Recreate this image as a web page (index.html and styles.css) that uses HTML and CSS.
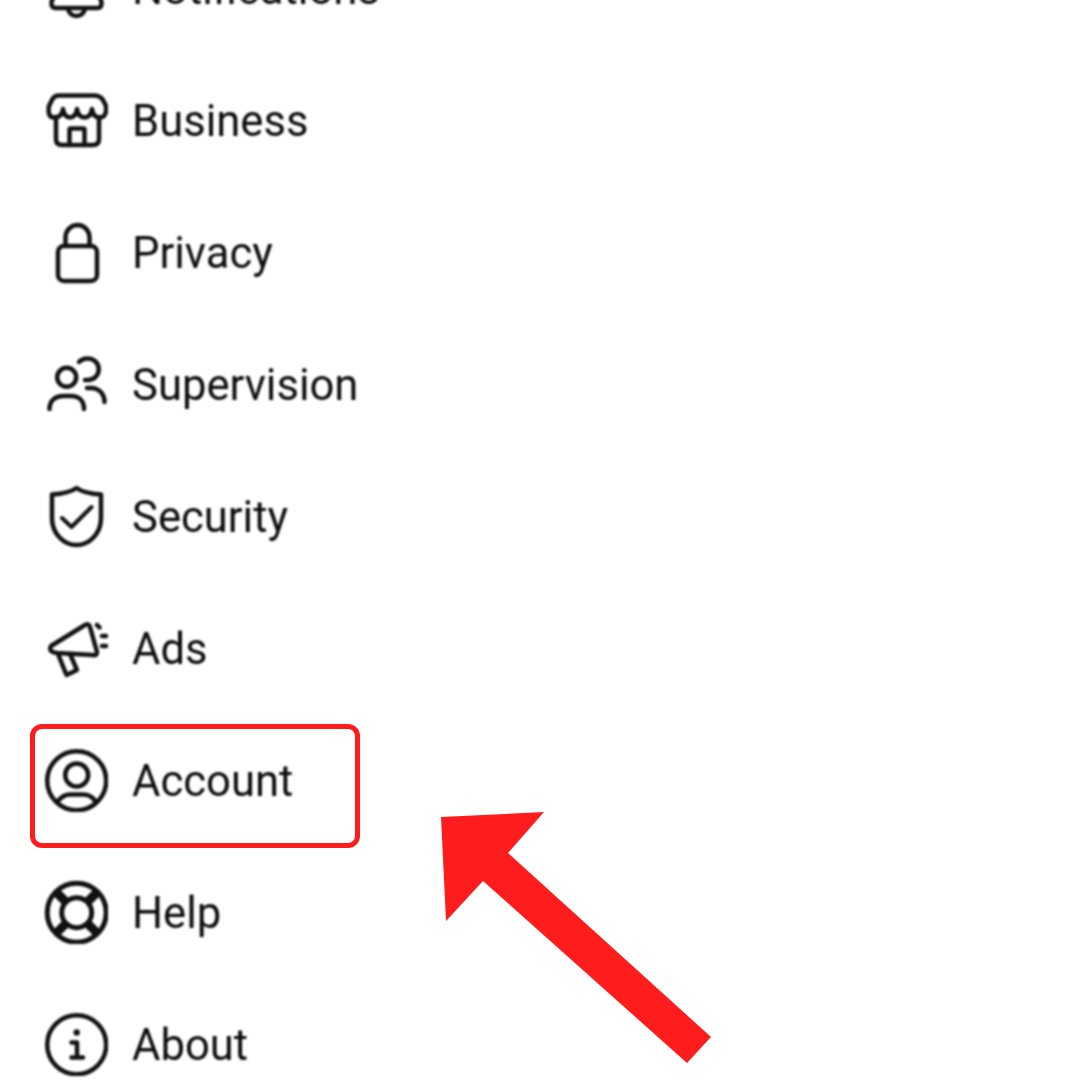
FILE: index.html
```html
<!DOCTYPE html>
<html lang="en">

<head>
    <meta charset="UTF-8">
    <title>Settings</title>
    <link rel="stylesheet" href="styles.css">
</head>

<body>
    <div class="menu">
        <div class="row">
            <svg class="icon" viewBox="0 0 64 64">
                <path d="M32.500 4C20 4 14 14 14 24V34L8 44Q6 52 12 52H53Q59 52 57 44L51 34V24C51 14 45 4 32.500 4Z" />
                <path d="M24 53Q26 60 32.500 60Q39 60 41 53" />
            </svg>
            <span class="label">Notifications</span>
        </div>
        <div class="row">
            <svg class="icon" viewBox="0 0 64 64">
                <path d="M15 7.500H50Q56 7.500 59 12L62 18Q63 30 55 29.500Q49 29 48 21Q47 29 40.500 29.500Q34 29 33 21Q32 29 26 29.500Q20 29 19 21Q18 29 11 29.500Q3 30 5 18L8 12Q10 7.500 15 7.500Z" />
                <path d="M12 29V51Q12 57 18 57H49Q55 57 55 51V29" />
                <path d="M25.500 57V41.500Q25.500 40.500 27 40.500H39Q40.500 40.500 40.500 41.500V57" />
            </svg>
            <span class="label">Business</span>
        </div>
        <div class="row">
            <svg class="icon" viewBox="0 0 64 64">
                <rect x="14" y="26" width="39" height="35" rx="6" />
                <path d="M21.500 26V17.500a12 12.500 0 0 1 24 0V26" />
            </svg>
            <span class="label">Privacy</span>
        </div>
        <div class="row">
            <svg class="icon" viewBox="0 0 64 64">
                <circle cx="22.700" cy="25.300" r="9.500" />
                <path d="M5.500 57C5.500 48 12 44 19 44H27C34 44 40 48 40 57" />
                <path d="M35 10Q39 6 44 6.500A10.500 10.500 0 0 1 44 28H41" />
                <path d="M43 36H47C55 36 60.500 42 60.500 50" />
            </svg>
            <span class="label">Supervision</span>
        </div>
        <div class="row">
            <svg class="icon" viewBox="0 0 64 64">
                <path d="M32.500 4C38 8 48 10 57 10.500V34C57 50 45 61 32.500 61C20 61 8 50 8 34V10.500C17 10 27 8 32.500 4Z" />
                <path class="check" d="M18 34L27.500 43L47.500 23" />
            </svg>
            <span class="label">Security</span>
        </div>
        <div class="row">
            <svg class="icon" viewBox="0 0 64 64">
                <path d="M7 30L41 9Q45 7 46 11L53 36Q53 40 49 39L13 37Q4 36 7 30Z" />
                <path d="M14 38L22.500 59L33 54L26 38" />
                <path d="M53 9L55.500 11.500M58 20H62M58 30H62" />
            </svg>
            <span class="label">Ads</span>
        </div>
        <div class="row">
            <svg class="icon" viewBox="0 0 64 64">
                <circle cx="32.700" cy="32.700" r="29.500" />
                <circle cx="32.700" cy="27" r="11.500" />
                <path d="M14 53C18 48 22 46.500 26 46.500H39C44 46.500 48 48 51 53" />
            </svg>
            <span class="label">Account</span>
        </div>
        <div class="row">
            <svg class="icon" viewBox="0 0 64 64">
                <circle class="ring" cx="32.700" cy="32.700" r="29.500" />
                <circle class="ring" cx="32.700" cy="32.700" r="15" />
                <path class="thick" d="M21.500 21.500L11.500 11.500M43.900 21.500L53.900 11.500M21.500 43.900L11.500 53.900M43.900 43.900L53.900 53.900" />
            </svg>
            <span class="label">Help</span>
        </div>
        <div class="row">
            <svg class="icon" viewBox="0 0 64 64">
                <circle cx="32.700" cy="32.700" r="29.500" />
                <circle class="dot" cx="32.700" cy="20.500" r="3.200" />
                <path d="M27.500 30.500H33V45.500M27.500 45.500H39" />
            </svg>
            <span class="label">About</span>
        </div>
    </div>

    <div class="highlight"></div>

    <svg class="arrow" viewBox="0 0 1080 1080">
        <polygon points="441,817 544,812 508,853 711,1037 687,1063 483,881 446,921" />
    </svg>
</body>

</html>
```

FILE: styles.css
```css
* {
    margin: 0;
    padding: 0;
    box-sizing: border-box;
}

html,
body {
    height: 1080px;
    overflow: hidden;
    background-color: #fff;
}

body {
    position: relative;
    font-family: Roboto, "Liberation Sans", sans-serif;
}

.menu {
    display: flex;
    flex-direction: column;
    margin-top: -78px;
    filter: blur(0.8px);
}

.row {
    display: flex;
    align-items: center;
    gap: 24px;
    height: 132px;
    padding-left: 44px;
}

.icon {
    width: 64px;
    height: 64px;
    flex-shrink: 0;
    fill: none;
    stroke: #111;
    stroke-width: 4.5;
    stroke-linecap: round;
    stroke-linejoin: round;
}

.icon .thick {
    stroke-width: 9;
    stroke-linecap: butt;
}

.icon .ring {
    stroke-width: 5;
}

.icon .check {
    stroke-width: 4;
}

.icon .dot {
    fill: #111;
    stroke: none;
}

.label {
    margin-top: 2px;
    font-size: 43.6px;
    color: #0c0c0c;
}

.highlight {
    position: absolute;
    left: 30px;
    top: 724px;
    width: 330px;
    height: 124px;
    border: 5px solid #ff1c1c;
    border-radius: 12px;
}

.arrow {
    position: absolute;
    left: 0;
    top: 0;
    width: 1080px;
    height: 1080px;
    fill: #ff1c1c;
}
```
